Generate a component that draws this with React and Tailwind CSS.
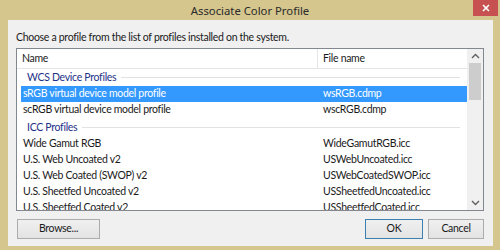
import React from "react";

const font = { fontFamily: 'Lato, "Segoe UI", sans-serif' };
const titleFont = { fontFamily: '"Noto Sans", "Segoe UI", sans-serif' };

const groups = [
  {
    title: "WCS Device Profiles",
    rows: [
      { name: "sRGB virtual device model profile", file: "wsRGB.cdmp", selected: true },
      { name: "scRGB virtual device model profile", file: "wscRGB.cdmp" },
    ],
  },
  {
    title: "ICC Profiles",
    rows: [
      { name: "Wide Gamut RGB", file: "WideGamutRGB.icc" },
      { name: "U.S. Web Uncoated v2", file: "USWebUncoated.icc" },
      { name: "U.S. Web Coated (SWOP) v2", file: "USWebCoatedSWOP.icc" },
      { name: "U.S. Sheetfed Uncoated v2", file: "USSheetfedUncoated.icc" },
      { name: "U.S. Sheetfed Coated v2", file: "USSheetfedCoated.icc" },
    ],
  },
];

const Chevron = ({ up }) => (
  <svg width="9" height="6" viewBox="0 0 9 6">
    <polyline
      points={up ? "1,5 4.5,1.5 8,5" : "1,1 4.5,4.5 8,1"}
      fill="none"
      stroke="#606060"
      strokeWidth="1.4"
    />
  </svg>
);

const Button = ({ children, width, primary }) => (
  <button
    className={`h-[20px] ${width} flex items-center justify-center text-[10.5px] text-[#1a1a1a] bg-gradient-to-b from-[#f0f0f0] to-[#e3e3e3] border ${
      primary ? "border-[#3c7fb1]" : "border-[#acacac]"
    }`}
  >
    {children}
  </button>
);

export default function App() {
  return (
    <div
      className="w-[500px] h-[250px] bg-[#d5c68e] flex flex-col overflow-hidden tracking-[-0.3px]"
      style={font}
    >
      {/* Title bar */}
      <div className="relative h-[20px] flex items-center justify-center">
        <span className="text-[11.3px] text-[#2a2a2a] leading-none pt-[1px] tracking-normal" style={titleFont}>
          Associate Color Profile
        </span>
        <div className="absolute right-[2px] top-0 w-[25px] h-[16px] bg-[#c75050] flex items-center justify-center">
          <svg width="8" height="8" viewBox="0 0 8 8">
            <path d="M1 1 L7 7 M7 1 L1 7" stroke="#fff" strokeWidth="1.6" />
          </svg>
        </div>
      </div>

      {/* Client area */}
      <div className="ml-[8px] w-[485px] h-[226px] bg-[#f0f0f0] pl-[8px] pt-[9px]">
        <div className="text-[10.5px] leading-[16px] text-[#1a1a1a]">
          Choose a profile from the list of profiles installed on the system.
        </div>

        {/* List box */}
        <div className="mt-[3px] w-[468px] h-[163px] border border-[#828790] bg-white flex overflow-hidden">
          <div className="w-[450px] flex flex-col">
            <div className="h-[20px] shrink-0 flex items-center border-b border-[#e5e5e5] text-[10.5px] text-[#1a1a1a]">
              <div className="w-[301px] h-full pl-[5px] flex items-center border-r border-[#e5e5e5]">Name</div>
              <div className="pl-[5px]">File name</div>
            </div>
            {groups.map((g) => (
              <div key={g.title}>
                <div className="ml-[4px] w-[446px] h-[17px] pl-[6px] pr-[7px] flex items-center gap-[5px] text-[10.5px] text-[#1e3287]">
                  <span className="whitespace-nowrap">{g.title}</span>
                  <div className="flex-1 h-px bg-[#e2e2e2]" />
                </div>
                {g.rows.map((r) => (
                  <div
                    key={r.name}
                    className={`ml-[4px] w-[446px] h-[16px] pl-[2px] flex items-center text-[10.5px] whitespace-nowrap ${
                      r.selected ? "bg-[#3399ff] text-white" : "text-[#1a1a1a]"
                    }`}
                  >
                    <div className="w-[300px]">{r.name}</div>
                    <div>{r.file}</div>
                  </div>
                ))}
                {g.title === "WCS Device Profiles" && <div className="h-[1px]" />}
              </div>
            ))}
          </div>

          {/* Scrollbar */}
          <div className="w-[16px] bg-[#f0f0f0] flex flex-col items-center">
            <div className="h-[14px] flex items-center justify-center">
              <Chevron up />
            </div>
            <div className="w-[12px] h-[37px] bg-[#cdcdcd]" />
            <div className="flex-1" />
            <div className="h-[14px] flex items-center justify-center">
              <Chevron />
            </div>
          </div>
        </div>

        {/* Buttons */}
        <div className="mt-[8px] w-[468px] flex items-center pl-[1px]">
          <Button width="w-[83px]">Browse...</Button>
          <div className="flex-1" />
          <div className="flex gap-[5px]">
            <Button width="w-[58px]" primary>
              OK
            </Button>
            <Button width="w-[56px]">Cancel</Button>
          </div>
        </div>
      </div>
    </div>
  );
}
